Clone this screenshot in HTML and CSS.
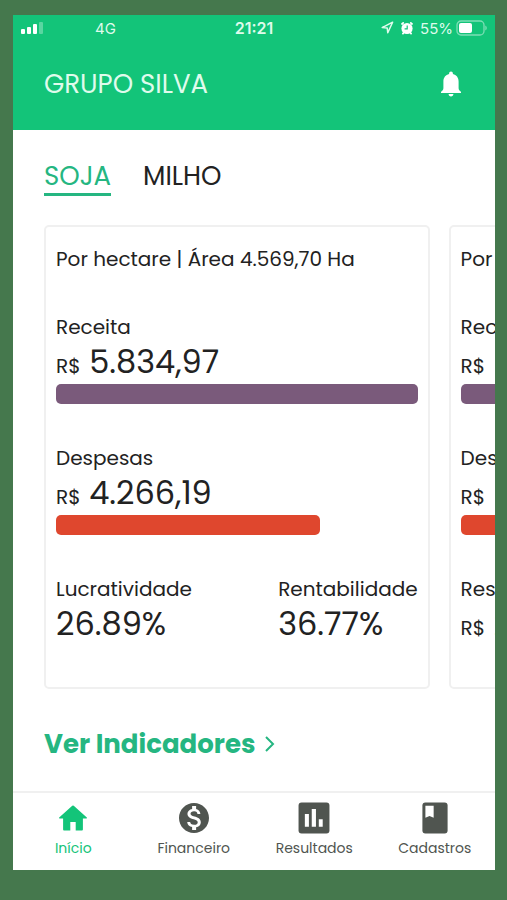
FILE: index.html
```html
<!DOCTYPE html>
<html lang="pt-BR">
<head>
<meta charset="utf-8">
<meta name="viewport" content="width=device-width, initial-scale=1">
<title>Grupo Silva</title>
<link rel="stylesheet" href="styles.css">
</head>
<body>
<div class="phone">
  <header class="header">
    <div class="status">
      <div class="status-left">
        <svg width="22" height="14" viewBox="0 0 22 14" fill="#fff" aria-hidden="true"><rect y="8" width="4" height="5" rx="1"/><rect x="6" y="6" width="4" height="7" rx="1"/><rect x="12" y="3" width="4" height="10" rx="1"/><rect x="18" y="1" width="4" height="12" rx="1" opacity=".3"/></svg>
        <span>4G</span>
      </div>
      <span class="clock">21:21</span>
      <div class="status-right">
        <div class="status-icons">
          <svg width="13" height="13" viewBox="0 0 13 13" fill="none" stroke="#dffbec" stroke-width="1.5" stroke-linejoin="round" aria-hidden="true"><path d="M1.2 6.6 11.6 1.2 6.8 11.8 6.2 7Z"/></svg>
          <svg width="14" height="14" viewBox="0 0 14 14" aria-hidden="true"><circle cx="7" cy="7.5" r="5.6" fill="#fff"/><path d="M2 3 3.200 1.900M12 3 10.800 1.900M3.4 12 2.9 12.600M10.600 12l.5.6" stroke="#fff" stroke-width="1.8" stroke-linecap="round"/><path d="M7.2 4.4v3.4H4.6" fill="none" stroke="#13c479" stroke-width="1.2"/></svg>
        </div>
        <span>55%</span>
        <svg width="31" height="16" viewBox="0 0 31 16" aria-hidden="true"><rect x="1" y="1" width="27" height="14" rx="4" fill="none" stroke="#fff" stroke-opacity=".45" stroke-width="1.3"/><rect x="3" y="3" width="13" height="10" rx="2" fill="#fff"/><path d="M29.3 5.6v4.8q1.5-.8 1.5-2.4t-1.5-2.4Z" fill="#fff" fill-opacity=".45"/></svg>
      </div>
    </div>
    <div class="titlebar">
      <h1>GRUPO SILVA</h1>
      <button class="bell" type="button" aria-label="Notificações">
        <svg width="20" height="26" viewBox="0 0 20 26" fill="#fff" aria-hidden="true"><path d="M10 .5c1.1 0 1.9.8 1.9 1.9v.6c3.5.8 5.7 3.7 5.7 7.5v6.6c0 1.7.8 2.7 2.4 3.6v1.3H0v-1.3c1.600-.9 2.400-1.900 2.400-3.600v-6.600c0-3.800 2.200-6.700 5.700-7.500v-.6C8.100 1.300 8.900.5 10 .5ZM7.600 23h4.800c0 1.500-1 2.500-2.400 2.500S7.600 24.500 7.600 23Z"/></svg>
      </button>
    </div>
  </header>

  <main class="content">
    <div class="tabs">
      <button class="tab tab-active" type="button">SOJA</button>
      <button class="tab" type="button">MILHO</button>
    </div>

    <div class="carousel">
      <article class="card">
        <h2>Por hectare | Área 4.569,70 Ha</h2>
        <section class="metric">
          <h3>Receita</h3>
          <p class="value"><small>R$</small> 5.834,97</p>
          <div class="bar bar-income" style="width:100%"></div>
        </section>
        <section class="metric">
          <h3>Despesas</h3>
          <p class="value"><small>R$</small> 4.266,19</p>
          <div class="bar bar-cost" style="width:73.1%"></div>
        </section>
        <div class="ratios">
          <section>
            <h3>Lucratividade</h3>
            <p class="value">26.89%</p>
          </section>
          <section>
            <h3>Rentabilidade</h3>
            <p class="value">36.77%</p>
          </section>
        </div>
      </article>

      <article class="card">
        <h2>Por</h2>
        <section class="metric">
          <h3>Receita</h3>
          <p class="value"><small>R$</small></p>
          <div class="bar bar-income" style="width:100%"></div>
        </section>
        <section class="metric">
          <h3>Despesas</h3>
          <p class="value"><small>R$</small></p>
          <div class="bar bar-cost" style="width:73.1%"></div>
        </section>
        <div class="ratios">
          <section>
            <h3>Resultado</h3>
            <p class="value"><small>R$</small> 2</p>
          </section>
        </div>
      </article>
    </div>

    <a class="more" href="#indicadores">Ver Indicadores
      <svg width="10" height="16" viewBox="0 0 10 16" fill="none" stroke="#25b681" stroke-width="2" aria-hidden="true"><path d="m1 1 7 7-7 7"/></svg>
    </a>
  </main>

  <nav class="nav">
    <a class="nav-item nav-active" href="#inicio">
      <svg width="36" height="36" viewBox="0 0 24 24" fill="currentColor" aria-hidden="true"><path d="M10.200 20.300v-5.600h3.600v5.600h4.200q.6 0 .6-.6V12.300h2.400q.6-.1.200-.6L12.500 3.900q-.5-.4-1 0L2.800 11.700q-.4.5.2.6H5.400v7.400q0 .6.6.600Z"/></svg>
      <span>Início</span>
    </a>
    <a class="nav-item" href="#financeiro">
      <svg width="36" height="36" viewBox="0 0 24 24" fill="currentColor" aria-hidden="true"><path d="M12 2C6.480 2 2 6.480 2 12s4.480 10 10 10 10-4.480 10-10S17.520 2 12 2zm1.410 16.090V20h-2.670v-1.930c-1.710-.36-3.160-1.460-3.270-3.400h1.960c.1 1.050.82 1.870 2.650 1.870 1.960 0 2.400-.98 2.400-1.590 0-.83-.44-1.610-2.670-2.140-2.480-.6-4.180-1.620-4.180-3.670 0-1.720 1.390-2.840 3.110-3.210V4h2.670v1.950c1.860.45 2.790 1.860 2.850 3.390H14.300c-.05-1.110-.64-1.870-2.220-1.870-1.500 0-2.400.68-2.400 1.640 0 .84.65 1.390 2.670 1.910s4.180 1.390 4.180 3.910c-.01 1.830-1.380 2.830-3.120 3.160z"/></svg>
      <span>Financeiro</span>
    </a>
    <a class="nav-item" href="#resultados">
      <svg width="36" height="36" viewBox="0 0 24 24" aria-hidden="true"><rect x="1.700" y="1.700" width="20.600" height="20.600" rx="2" fill="currentColor"/><path d="M5.900 9.300h2.700v8.600H5.900ZM10.500 6h2.800v11.900h-2.800ZM15.200 12.900h2.600v5h-2.600Z" fill="#fff"/></svg>
      <span>Resultados</span>
    </a>
    <a class="nav-item" href="#cadastros">
      <svg width="36" height="36" viewBox="0 0 24 24" aria-hidden="true"><rect x="3.600" y="1.700" width="16.800" height="20.600" rx="2" fill="currentColor"/><path d="M5.600 3.900h5.500v8L8.350 10.600 5.600 11.900Z" fill="#fff"/></svg>
      <span>Cadastros</span>
    </a>
  </nav>
</div>
</body>
</html>
```

FILE: styles.css
```css
* {
  box-sizing: border-box;
}

body {
  margin: 0;
  padding: 15px 12px 30px 13px;
  background: #45784d;
  color: #222;
  font-family: Poppins, Inter, "Liberation Sans", sans-serif;
}

h1, h2, h3, p {
  margin: 0;
  font-weight: 400;
}

button {
  padding: 0;
  border: 0;
  background: none;
  color: inherit;
  font: inherit;
}

a {
  color: inherit;
  text-decoration: none;
}

svg {
  display: block;
}

.phone {
  display: flex;
  flex-direction: column;
  min-height: calc(100vh - 45px);
  background: #fff;
}

.header {
  height: 115px;
  background: #13c479;
  color: #dffbec;
}

.status {
  display: grid;
  grid-template-columns: 1fr auto 1fr;
  align-items: center;
  height: 26px;
  padding: 0 8px;
  font-family: Inter, "Liberation Sans", sans-serif;
  font-size: 15px;
}

.status-left {
  display: flex;
  align-items: center;
  gap: 52px;
}

.clock {
  font-size: 16px;
  font-weight: 600;
}

.status-right {
  display: flex;
  align-items: center;
  justify-content: flex-end;
  gap: 3px;
}

.status-icons {
  display: flex;
  gap: 6px;
  margin-right: 3px;
}

.titlebar {
  display: flex;
  align-items: center;
  justify-content: space-between;
  height: 86px;
  padding: 0 34px 0 31px;
}

.titlebar h1 {
  font-size: 26px;
}

.content {
  padding-top: 28px;
}

.tabs {
  display: flex;
  gap: 32px;
  padding: 0 31px;
}

.tab {
  height: 38px;
  border-bottom: 3px solid transparent;
  font-size: 26px;
  line-height: 34px;
}

.tab-active {
  border-color: #25b681;
  color: #25b681;
}

.carousel {
  display: flex;
  gap: 19px;
  margin-top: 29px;
  padding-left: 31px;
  overflow: hidden;
}

.card {
  flex: 0 0 calc((100% + 31px) * 0.8);
  padding: 18px 10px 44px;
  border: 2px solid #f0f0f0;
  border-radius: 5px;
}

.card h2,
.card h3 {
  font-size: 20px;
  line-height: 32px;
  white-space: nowrap;
}

.card h2 {
  line-height: 28px;
}

.metric,
.ratios {
  margin-top: 38px;
}

.value {
  font-size: 32px;
  line-height: 38px;
  white-space: nowrap;
}

.value small {
  font-size: 20px;
  line-height: 1;
}

.bar {
  height: 20px;
  margin-top: 3px;
  border-radius: 5px;
}

.bar-income {
  background: #7a5a7b;
}

.bar-cost {
  background: #df472e;
}

.ratios {
  display: flex;
  justify-content: space-between;
}

.more {
  display: flex;
  align-items: center;
  gap: 10px;
  margin-top: 37px;
  padding: 0 31px;
  color: #25b681;
  font-size: 26px;
  font-weight: 700;
  line-height: 36px;
}

.nav {
  display: flex;
  height: 79px;
  margin-top: auto;
  padding-top: 7px;
  border-top: 2px solid #f0f0f0;
  color: #505550;
}

.nav-item {
  display: flex;
  flex: 1;
  flex-direction: column;
  align-items: center;
  font-size: 14px;
  line-height: 24px;
}

.nav-active {
  color: #13c479;
}
```
